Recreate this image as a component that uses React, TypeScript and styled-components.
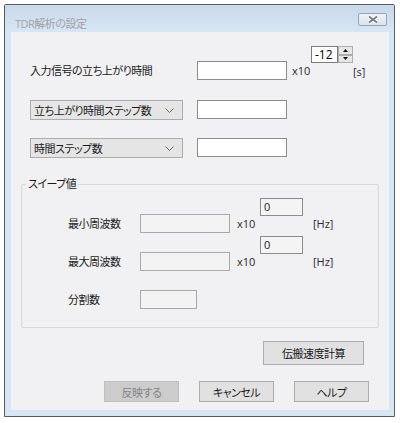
import React from "react";
import styled, { createGlobalStyle } from "styled-components";

const GlobalStyle = createGlobalStyle`
  body {
    margin: 0;
    background: #ffffff;
    font-family: "Open Sans", "Noto Sans CJK JP", sans-serif;
    font-size: 11px;
    font-feature-settings: "palt";
    letter-spacing: -0.5px;
    color: #1a1a1a;
  }
  * {
    box-sizing: border-box;
  }
`;

const Window = styled.div`
  margin: 4px 0 0 4px;
  width: 391px;
  height: 413px;
  border: 1px solid #5a5a5a;
  border-radius: 2px 2px 0 0;
  background: #d7e6f4;
  display: flex;
  flex-direction: column;
`;

const TitleBar = styled.div`
  height: 27px;
  display: flex;
  justify-content: space-between;
  align-items: flex-start;
  padding: 8px 7px 0 10px;
  background: linear-gradient(#c8d9ea, #d7e6f4);
`;

const TitleText = styled.div`
  margin-top: 4px;
  line-height: 14px;
  color: #a2a2a2;
`;

const CloseButton = styled.div`
  width: 29px;
  height: 13px;
  border: 1px solid #95a5b6;
  border-radius: 2px;
  background: linear-gradient(#eef3f8, #d9e3ed);
  display: flex;
  align-items: center;
  justify-content: center;
`;

const Client = styled.div`
  margin-left: 6px;
  width: 378px;
  height: 378px;
  background: #f1f0f3;
  display: flex;
  flex-direction: column;
  padding-top: 14px;
`;

const TopSection = styled.div`
  padding-left: 19px;
  display: flex;
  flex-direction: column;
`;

const Row = styled.div<{ $gap?: number }>`
  display: flex;
  align-items: flex-start;
  margin-top: ${(p) => p.$gap ?? 0}px;
`;

const Line = styled.div<{ $offset?: number }>`
  display: flex;
  align-items: center;
  height: 19px;
  margin-top: ${(p) => p.$offset ?? 0}px;
`;

const Label = styled.div<{ $width: number }>`
  width: ${(p) => p.$width}px;
  white-space: nowrap;
  line-height: 19px;
`;

const TextBox = styled.input<{ $width?: number; $muted?: boolean }>`
  width: ${(p) => p.$width ?? 90}px;
  height: 19px;
  margin: 0;
  padding: 0 3px;
  border: 1px solid ${(p) => (p.$muted ? "#a9a9a9" : "#8c8c8c")};
  background: ${(p) => (p.$muted ? "#f3f3f3" : "#ffffff")};
  font: inherit;
  color: #1a1a1a;
  outline: none;
`;

const Mult = styled.div<{ $left: number; $width: number }>`
  margin-left: ${(p) => p.$left}px;
  width: ${(p) => p.$width}px;
  line-height: 19px;
  letter-spacing: normal;
  color: #2a2a2a;
`;

const ExpColumn = styled.div`
  display: flex;
  flex-direction: column;
`;

const Spinner = styled.div`
  display: flex;
  height: 17px;
`;

const SpinValue = styled.div`
  width: 27px;
  height: 17px;
  border: 1px solid #7d7d7d;
  background: #ffffff;
  padding-left: 3px;
  line-height: 15px;
  font-size: 12px;
  letter-spacing: normal;
  color: #000;
`;

const SpinButtons = styled.div`
  width: 15px;
  display: flex;
  flex-direction: column;
`;

const SpinButton = styled.div`
  height: 8.5px;
  border: 1px solid #adadad;
  background: #e6e6e6;
  display: flex;
  align-items: center;
  justify-content: center;
`;

const Unit = styled.div<{ $left: number; $top: number }>`
  padding-left: ${(p) => p.$left}px;
  margin-top: ${(p) => p.$top}px;
  line-height: 19px;
  letter-spacing: normal;
  color: #2a2a3a;
`;

const Combo = styled.div`
  width: 153px;
  height: 20px;
  margin-right: 14px;
  border: 1px solid #acacac;
  background: #e5e5e5;
  display: flex;
  align-items: center;
  justify-content: space-between;
  padding: 0 8px 0 3px;
  white-space: nowrap;
`;

const Group = styled.div`
  position: relative;
  margin: 26px 0 0 10px;
  width: 358px;
  border: 1px solid #d8d8d8;
  border-radius: 2px;
  padding: 13px 0 18px 46px;
  display: flex;
  flex-direction: column;
`;

const Legend = styled.span`
  position: absolute;
  top: -8px;
  left: 4px;
  padding: 0 2px;
  background: #f1f0f3;
  line-height: 14px;
`;

const ExpBox = styled.div`
  width: 43px;
  height: 18px;
  border: 1px solid #8c8c8c;
  background: #f4f4f4;
  padding-left: 3px;
  line-height: 16px;
  letter-spacing: normal;
  color: #1a1a1a;
`;

const CalcButton = styled.div`
  align-self: flex-end;
  margin: 13px 25px 0 0;
  width: 101px;
  height: 24px;
  border: 1px solid #adadad;
  background: #e1e1e1;
  display: flex;
  align-items: center;
  justify-content: center;
`;

const ButtonRow = styled.div`
  display: flex;
  justify-content: flex-end;
  gap: 20px;
  margin-top: 16px;
  padding-right: 20px;
`;

const Button = styled.div<{ $disabled?: boolean }>`
  width: 75px;
  height: 21px;
  border: 1px solid ${(p) => (p.$disabled ? "#bfbfbf" : "#adadad")};
  background: ${(p) => (p.$disabled ? "#cccccc" : "#e1e1e1")};
  color: ${(p) => (p.$disabled ? "#838383" : "#1a1a1a")};
  display: flex;
  align-items: center;
  justify-content: center;
`;

const Chevron = () => (
  <svg width="9" height="5" viewBox="0 0 9 5">
    <polyline points="0.5,0.5 4.5,4.5 8.5,0.5" fill="none" stroke="#6a6a6a" strokeWidth="1" />
  </svg>
);

const Triangle = ({ up }: { up?: boolean }) => (
  <svg width="5" height="3" viewBox="0 0 5 3">
    <polygon points={up ? "2.5,0 5,3 0,3" : "0,0 5,0 2.5,3"} fill="#111" />
  </svg>
);

function SweepRow({ label, gap }: { label: string; gap: number }) {
  return (
    <Row $gap={gap}>
      <Line $offset={16}>
        <Label $width={72}>{label}</Label>
        <TextBox readOnly $muted value="" />
        <Mult $left={7} $width={23}>x10</Mult>
      </Line>
      <ExpBox>0</ExpBox>
      <Unit $left={10} $top={16}>[Hz]</Unit>
    </Row>
  );
}

export default function App() {
  return (
    <>
      <GlobalStyle />
      <Window>
        <TitleBar>
          <TitleText>TDR解析の設定</TitleText>
          <CloseButton>
            <svg width="12" height="9" viewBox="0 0 12 9">
              <path d="M2 1.5 L10 7.5 M10 1.5 L2 7.5" stroke="#ffffff" strokeWidth="3.6" />
              <path d="M2 1.5 L10 7.5 M10 1.5 L2 7.5" stroke="#7c7c7c" strokeWidth="1.8" />
            </svg>
          </CloseButton>
        </TitleBar>
        <Client>
          <TopSection>
            <Row>
              <Line $offset={15}>
                <Label $width={167}>入力信号の立ち上がり時間</Label>
                <TextBox readOnly value="" />
                <Mult $left={5} $width={19}>x10</Mult>
              </Line>
              <ExpColumn>
                <Spinner>
                  <SpinValue>-12</SpinValue>
                  <SpinButtons>
                    <SpinButton><Triangle up /></SpinButton>
                    <SpinButton><Triangle /></SpinButton>
                  </SpinButtons>
                </Spinner>
                <Unit $left={42} $top={-1}>[s]</Unit>
              </ExpColumn>
            </Row>
            <Row $gap={19}>
              <Combo>
                <span>立ち上がり時間ステップ数</span>
                <Chevron />
              </Combo>
              <TextBox readOnly value="" />
            </Row>
            <Row $gap={18}>
              <Combo>
                <span>時間ステップ数</span>
                <Chevron />
              </Combo>
              <TextBox readOnly value="" />
            </Row>
          </TopSection>
          <Group>
            <Legend>スイープ値</Legend>
            <SweepRow label="最小周波数" gap={0} />
            <SweepRow label="最大周波数" gap={3} />
            <Row $gap={19}>
              <Line>
                <Label $width={72}>分割数</Label>
                <TextBox readOnly $muted $width={57} value="" />
              </Line>
            </Row>
          </Group>
          <CalcButton>伝搬速度計算</CalcButton>
          <ButtonRow>
            <Button $disabled>反映する</Button>
            <Button>キャンセル</Button>
            <Button>ヘルプ</Button>
          </ButtonRow>
        </Client>
      </Window>
    </>
  );
}
